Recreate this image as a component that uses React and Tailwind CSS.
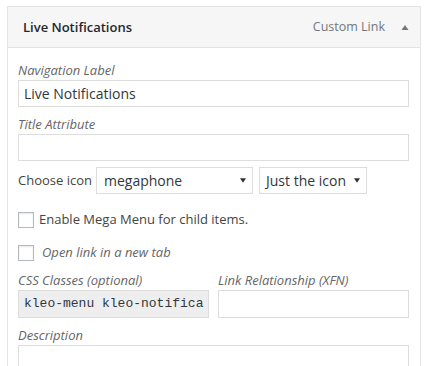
import React from "react";

function Tri({ up = false, color = "#333", w = 7, h = 5 }) {
  return (
    <svg width={w} height={h} viewBox="0 0 7 5" className="block">
      {up ? <polygon points="0,5 7,5 3.5,0" fill={color} /> : <polygon points="0,0 7,0 3.5,5" fill={color} />}
    </svg>
  );
}

export default function App() {
  const font = { fontFamily: '"Open Sans", "Liberation Sans", sans-serif' };
  return (
    <div className="w-[436px] h-[366px] bg-white overflow-hidden pt-[6px] pl-[7px]" style={font}>
      <div className="w-[414px] h-[400px] border border-[#e5e5e5] bg-white">
        <div className="h-[41px] bg-[#f6f6f6] border-b border-[#e2e2e2] flex items-center pl-[15px] pr-[11px]">
          <span className="text-[13px] font-semibold text-[#23282d] leading-none">Live Notifications</span>
          <span className="ml-auto text-[12.5px] text-[#72777c] leading-none">Custom Link</span>
          <span className="ml-[16px]"><Tri up color="#72777c" w={8} h={5} /></span>
        </div>
        <div className="pl-[10px] pt-[12px] text-[#32373c]">
          <div className="h-[20px] leading-[20px] text-[13px] italic text-[#666]">Navigation Label</div>
          <div className="w-[391px] h-[27px] border border-[#ddd] flex items-center pl-[5px] text-[14px] text-[#32373c]">Live Notifications</div>
          <div className="mt-[7px] h-[20px] leading-[20px] text-[13px] italic text-[#666]">Title Attribute</div>
          <div className="w-[391px] h-[27px] border border-[#ddd]"></div>
          <div className="mt-[6px] flex items-center h-[27px]">
            <span className="text-[13px] text-[#444] w-[78px]">Choose icon</span>
            <div className="w-[157px] h-[27px] border border-[#ddd] flex items-center pl-[7px] pr-[6px] text-[14px] text-[#32373c]">
              <span>megaphone</span>
              <span className="ml-auto"><Tri color="#333" w={6} h={5} /></span>
            </div>
            <div className="ml-[6px] w-[108px] h-[27px] border border-[#ddd] flex items-center pl-[6px] pr-[6px] text-[14px] text-[#32373c]">
              <span>Just the icon</span>
              <span className="ml-auto"><Tri color="#333" w={6} h={5} /></span>
            </div>
          </div>
          <div className="mt-[18px] flex items-center h-[16px]">
            <span className="w-[16px] h-[16px] border border-[#b4b9be] shadow-[inset_0_1px_2px_rgba(0,0,0,0.1)]"></span>
            <span className="ml-[5px] text-[13px] text-[#444]">Enable Mega Menu for child items.</span>
          </div>
          <div className="mt-[17px] flex items-center h-[16px]">
            <span className="w-[16px] h-[16px] border border-[#b4b9be] shadow-[inset_0_1px_2px_rgba(0,0,0,0.1)]"></span>
            <span className="ml-[8px] text-[13px] italic text-[#666]">Open link in a new tab</span>
          </div>
          <div className="mt-[10px] flex gap-[9px]">
            <div className="w-[191px]">
              <div className="h-[19px] leading-[19px] text-[13px] italic text-[#666]">CSS Classes (optional)</div>
              <div className="w-[191px] h-[28px] border border-[#ddd] bg-[#eee] flex items-center pl-[5px] overflow-hidden whitespace-nowrap text-[13px] text-[#32373c]" style={{ fontFamily: '"Liberation Mono", monospace' }}>kleo-menu kleo-notifica</div>
            </div>
            <div className="w-[191px]">
              <div className="h-[19px] leading-[19px] text-[13px] italic text-[#666]">Link Relationship (XFN)</div>
              <div className="w-[191px] h-[28px] border border-[#ddd]"></div>
            </div>
          </div>
          <div className="mt-[7px] h-[20px] leading-[20px] text-[13px] italic text-[#666]">Description</div>
          <div className="w-[391px] h-[60px] border border-[#ddd]"></div>
        </div>
      </div>
    </div>
  );
}
